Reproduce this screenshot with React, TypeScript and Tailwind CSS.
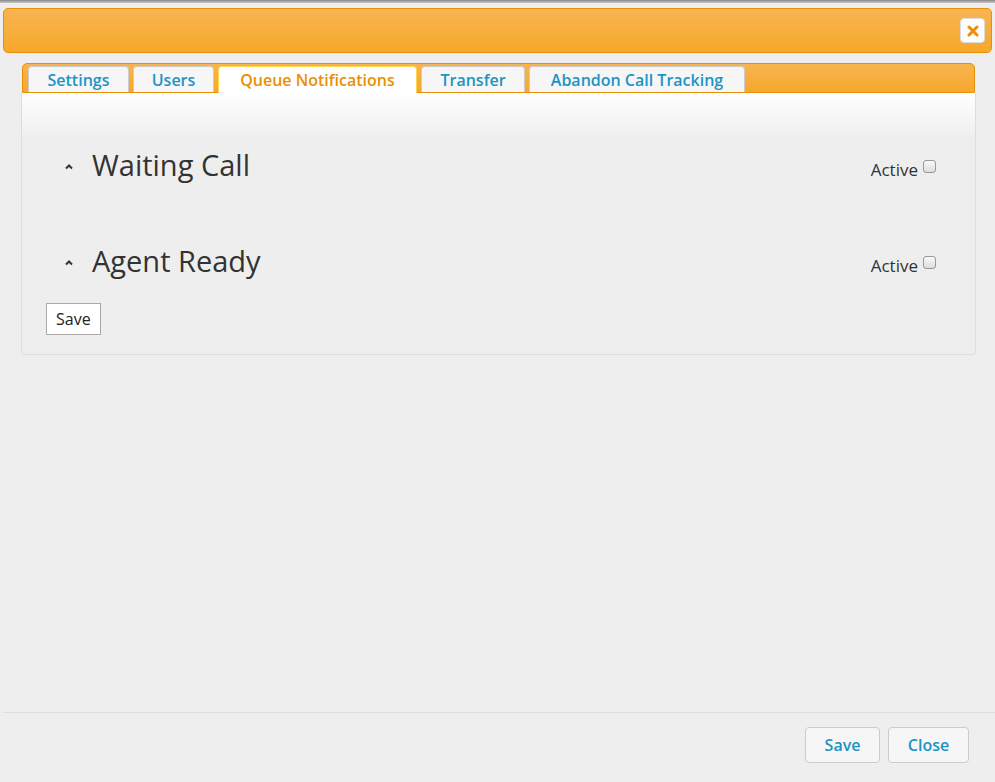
import React from "react";

const tabs: [string, number][] = [
  ["Settings", 101],
  ["Users", 81],
  ["Queue Notifications", 199],
  ["Transfer", 104],
  ["Abandon Call Tracking", 216],
];

function Section({ title }: { title: string }) {
  return (
    <div className="flex items-start justify-between pl-[42px] pr-[39px] h-[96px]">
      <div className="flex items-center gap-[18px] pt-[17px]">
        <svg width="10" height="7" viewBox="0 0 10 7" className="mt-[4px]">
          <path d="M2 5.5 L5 2.5 L8 5.5" fill="none" stroke="#333" strokeWidth="2" />
        </svg>
        <span className="text-[29px] text-[#333] leading-none">{title}</span>
      </div>
      <div className="flex items-start gap-[5px] pt-[27px]">
        <span className="text-[17px] text-[#333] leading-none mt-[1px]">Active</span>
        <span className="w-[13px] h-[13px] rounded-[3px] border border-[#999] bg-gradient-to-b from-[#fafafa] to-[#dcdcdc]" />
      </div>
    </div>
  );
}

export default function App() {
  return (
    <div
      className="w-[995px] h-[782px] bg-[#eeeeee] flex flex-col overflow-hidden"
      style={{ fontFamily: '"Open Sans", "DejaVu Sans", sans-serif' }}
    >
      <div className="h-[3px] bg-gradient-to-b from-[#8a8a8a] to-[#c8c8c8]" />
      <div className="relative mx-[3px] mt-[5px] h-[45px] rounded-[5px] border border-[#e78f08] bg-gradient-to-b from-[#f8b44f] to-[#f6a828]">
        <button className="absolute right-[6px] top-[9px] w-[25px] h-[25px] rounded-[4px] border border-[#dddddd] bg-[#fdfdfd] flex items-center justify-center">
          <svg width="12" height="12" viewBox="0 0 12 12">
            <path d="M2 2 L10 10 M10 2 L2 10" stroke="#ef8c08" strokeWidth="3" strokeLinecap="round" />
          </svg>
        </button>
      </div>
      <div className="ml-[21px] w-[955px] mt-[10px] flex flex-col">
        <div className="ml-[1px] w-[953px] h-[30px] rounded-t-[5px] border border-[#e78f08] bg-gradient-to-b from-[#f8b44f] to-[#f6a828] flex items-end gap-[4px] pl-[5px]">
          {tabs.map(([t, w], i) => {
            const active = i === 2;
            return (
              <div
                key={t}
                style={{ width: w }}
                className={
                  active
                    ? "h-[27px] -mb-[1px] rounded-t-[4px] border border-b-0 border-[#fbd850] bg-white text-[#eb8f00] text-[16px] font-semibold flex items-center justify-center"
                    : "h-[26px] rounded-t-[4px] border border-b-0 border-[#cccccc] bg-[#f6f6f6] text-[#1c94c4] text-[16px] font-semibold flex items-center justify-center"
                }
              >
                {t}
              </div>
            );
          })}
        </div>
        <div className="h-[262px] border border-t-0 border-[#dddddd] rounded-b-[4px] bg-gradient-to-b from-[#ffffff] to-[#eeeeee] bg-no-repeat [background-size:100%_45px] bg-[#eeeeee] pt-[40px] flex flex-col">
          <Section title="Waiting Call" />
          <Section title="Agent Ready" />
          <div className="pl-[24px] -mt-[22px]">
            <button className="h-[32px] px-[9px] border border-[#aaaaaa] bg-white text-[16px] text-[#222]">Save</button>
          </div>
        </div>
      </div>
      <div className="flex-1" />
      <div className="ml-[3px] border-t border-[#dddddd] h-[70px] flex justify-end items-start pt-[14px] pr-[26px] gap-[8px]">
        <button className="h-[36px] w-[75px] rounded-[4px] border border-[#cccccc] bg-[#f6f6f6] text-[#1c94c4] text-[16px] font-semibold">Save</button>
        <button className="h-[36px] w-[81px] rounded-[4px] border border-[#cccccc] bg-[#f6f6f6] text-[#1c94c4] text-[16px] font-semibold">Close</button>
      </div>
    </div>
  );
}
